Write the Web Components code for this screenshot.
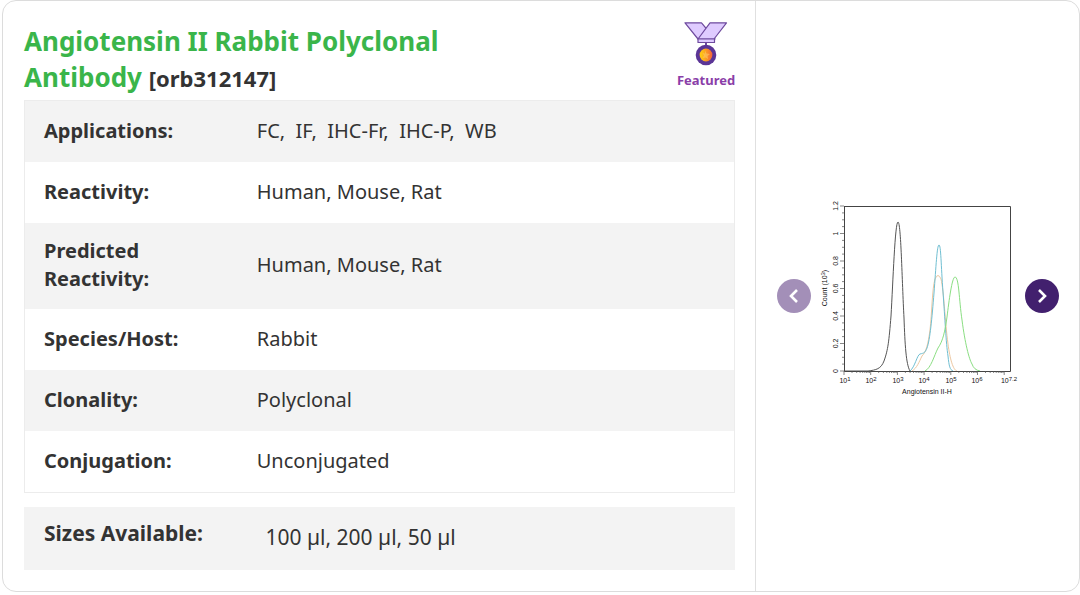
<!DOCTYPE html>
<html lang="en">
<head>
<meta charset="utf-8">
<meta name="viewport" content="width=device-width, initial-scale=1">
<title>Angiotensin II Rabbit Polyclonal Antibody</title>
<style>
body { margin: 0; padding: 0 0 3px 2px; background: #fff; color: #333; font: 20px/28px "Noto Sans", "Open Sans", sans-serif; }
</style>
</head>
<body>
<product-card>
  <product-title slot="title" name="Angiotensin II Rabbit Polyclonal Antibody" code="orb312147"></product-title>
  <featured-badge slot="badge">Featured</featured-badge>
  <spec-table slot="specs"></spec-table>
  <size-list slot="sizes" label="Sizes Available:">100 µl, 200 µl, 50 µl</size-list>
  <image-carousel slot="media"><histogram-chart></histogram-chart></image-carousel>
</product-card>
<script>
class BaseElement extends HTMLElement {
  connectedCallback() {
    if (!this.shadowRoot) this.attachShadow({ mode: "open" }).innerHTML = this.render();
  }
}

customElements.define("product-card", class extends BaseElement {
  render() {
    return `<style>
      :host { display: grid; grid-template-columns: 7fr 3fr; border: 1px solid #dcdcdc; border-radius: 14px; background: #fff; }
      .info { padding: 22px 20px 21px 21px; border-right: 1px solid #e0e0e0; min-width: 0; }
      header { display: flex; justify-content: space-between; align-items: flex-start; padding-bottom: 5px; }
      .media { display: flex; align-items: center; min-width: 0; }
      ::slotted([slot=title]) { max-width: 480px; }
      ::slotted([slot=sizes]) { margin-top: 14px; }
      ::slotted([slot=media]) { flex: 1; }
    </style>
    <section class="info">
      <header><slot name="title"></slot><slot name="badge"></slot></header>
      <slot name="specs"></slot>
      <slot name="sizes"></slot>
    </section>
    <section class="media"><slot name="media"></slot></section>`;
  }
});

customElements.define("product-title", class extends BaseElement {
  render() {
    return `<style>
      :host { display: block; }
      h1 { margin: 0; font-size: 26px; line-height: 36px; font-weight: 700; }
      a { color: #3ab54a; text-decoration: none; }
      span { font-size: 22px; line-height: 28px; }
    </style>
    <h1><a href="#">${this.getAttribute("name")}</a> <span>[${this.getAttribute("code")}]</span></h1>`;
  }
});

customElements.define("featured-badge", class extends BaseElement {
  render() {
    return `<style>
      :host { display: flex; flex-direction: column; align-items: center; color: #8a3ea8; font-size: 13px; line-height: 20px; font-weight: 700; }
      svg { display: block; overflow: visible; margin-bottom: 3px; }
    </style>
    <svg width="44" height="44" viewBox="0 1 44 44" aria-hidden="true">
      <defs><linearGradient id="gold"><stop offset="0.15" stop-color="#ffc414"/><stop offset="1" stop-color="#f4633c"/></linearGradient></defs>
      <g fill="#dfcbff" stroke="#6e4a9e" stroke-width="1.2" stroke-linejoin="round">
        <path d="M1 0.8H17.5L31 17H14Z"/><path d="M26 0.8H42.5L30 17H14Z"/><path d="M14 17H30.5V20.5H14Z"/>
      </g>
      <path d="M22 20V24" stroke="#6e4a9e" stroke-width="2"/>
      <circle cx="22" cy="33" r="10.3" fill="#5b3596"/><circle cx="22" cy="33" r="6.4" fill="url(#gold)"/>
      <path d="M21 28.5L22.5 31.5L26 32L23.5 34L24 37L21.5 35.5L18.5 36L20 33.5L18.5 31L21 31.5Z" fill="#ffc866" opacity=".6"/>
    </svg>
    <slot></slot>`;
  }
});

customElements.define("spec-table", class extends BaseElement {
  render() {
    const rows = [
      ["Applications:", "FC,&nbsp; IF,&nbsp; IHC-Fr,&nbsp; IHC-P,&nbsp; WB"],
      ["Reactivity:", "Human, Mouse, Rat"],
      ["Predicted Reactivity:", "Human, Mouse, Rat"],
      ["Species/Host:", "Rabbit"],
      ["Clonality:", "Polyclonal"],
      ["Conjugation:", "Unconjugated"]
    ];
    return `<style>
      :host { display: block; border: 1px solid #ececec; }
      table { width: 100%; border-collapse: collapse; table-layout: fixed; }
      tr:nth-child(odd) { background: #f3f3f3; }
      th, td { height: 61px; padding: 14px 19px 16px; box-sizing: border-box; text-align: left; vertical-align: middle; }
      th { width: 30%; padding-right: 60px; }
    </style>
    <table><tbody>${rows.map(([k, v]) => `<tr><th scope="row">${k}</th><td>${v}</td></tr>`).join("")}</tbody></table>`;
  }
});

customElements.define("size-list", class extends BaseElement {
  render() {
    return `<style>
      :host { display: block; font-size: 21px; }
      dl { display: flex; margin: 0; padding: 12px 20px 19px; background: #f3f3f3; }
      dt { flex: 0 0 33%; font-weight: 700; }
      dd { margin: 0; padding-top: 4px; }
    </style>
    <dl><dt>${this.getAttribute("label")}</dt><dd><slot></slot></dd></dl>`;
  }
});

customElements.define("image-carousel", class extends BaseElement {
  render() {
    return `<style>
      :host { display: flex; align-items: center; justify-content: space-between; padding: 0 20px 0 21px; }
      button { flex: none; width: 34px; height: 34px; padding: 0; border: 0; border-radius: 50%; background: #42206e; display: grid; place-items: center; cursor: pointer; }
      button:disabled { background: #a38fb8; cursor: default; }
      svg { display: block; fill: none; stroke: #fff; stroke-width: 2.6; }
    </style>
    <button disabled aria-label="Previous image"><svg width="14" height="16" viewBox="0 0 14 16"><path d="M10 2L4 8L10 14"/></svg></button>
    <slot></slot>
    <button aria-label="Next image"><svg width="14" height="16" viewBox="0 0 14 16"><path d="M4 2L10 8L4 14"/></svg></button>`;
  }
});

customElements.define("histogram-chart", class extends BaseElement {
  render() {
    const decade = 26.7, left = 844, base = 371;
    let ticks = "";
    for (let d = 0; d < 6.2; d++) {
      ticks += `M${left + d * decade} ${base}v4`;
      for (let m = 2; m < 10; m++) {
        const x = left + (d + Math.log10(m)) * decade;
        if (x < 1010) ticks += `M${x.toFixed(1)} ${base}v2`;
      }
    }
    for (let i = 0; i <= 24; i++) ticks += `M${left} ${(base - i * 6.875).toFixed(1)}h${i % 4 ? -2 : -4}`;
    const xs = [["1", 845], ["2", 871], ["3", 898], ["4", 924], ["5", 951], ["6", 977], ["7.2", 1009]]
      .map(([e, x]) => `<text x="${x}" y="383" text-anchor="middle">10<tspan dy="-2" font-size="6">${e}</tspan></text>`).join("");
    const ys = ["0", "0.2", "0.4", "0.6", "0.8", "1", "1.2"]
      .map((t, i) => `<text transform="translate(838 ${base - i * 27.5}) rotate(-90)" text-anchor="middle">${t}</text>`).join("");
    return `<style>
      :host { display: block; }
      svg { display: block; width: 202px; height: 202px; }
      text { font-family: "Liberation Sans", Arial, sans-serif; font-size: 7px; fill: #111; }
    </style>
    <svg viewBox="817 195 202 202" role="img" aria-label="Flow cytometry histogram">
      <g fill="none" stroke-width="1">
        <path stroke="#edc7a0" d="M912 371C917 368 919 362 922 356C926 352 928 345 930 330C932 313 932 289 935 279Q938 272 941 279C944 292 945 322 948 344C950 359 953 370 957 371"/>
        <path stroke="#70bfd2" d="M910 371C915 367 917 355 920 354C924 353 925 353 927 348C930 340 932 318 934 293C936 267 937 245 939 245C941 245 941 266 943 292C945 319 946 343 948 356C949 366 950 370 953 371"/>
        <path stroke="#8ade82" d="M925 371C931 368 934 356 938 348C943 341 945 331 947 317C949 301 952 277 955 277C959 277 959 300 962 320C965 343 969 359 972 364Q974 370 980 371"/>
        <path stroke="#555" d="M844 371H868C876 370 881 369 884 361C888 350 889 341 891 316C893 282 895 222 898 222C901 222 902 281 904 318C905 345 906 364 910 371"/>
        <path stroke="#444" d="M844.5 206V371.5H1010.5V206.5H844"/>
        <path stroke="#555" stroke-width=".7" d="${ticks}"/>
      </g>
      ${xs}${ys}
      <text x="927" y="394" text-anchor="middle">Angiotensin II-H</text>
      <text transform="translate(827 288) rotate(-90)" text-anchor="middle">Count (10<tspan dy="-2" font-size="6">3</tspan><tspan dy="2">)</tspan></text>
    </svg>`;
  }
});
</script>
</body>
</html>
